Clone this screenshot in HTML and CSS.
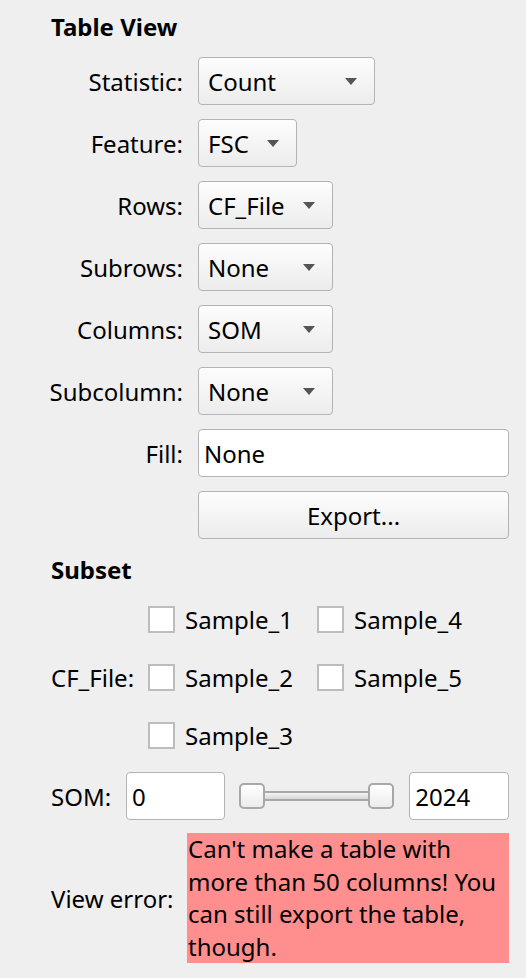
FILE: index.html
```html
<!DOCTYPE html>
<html>
<head>
<meta charset="utf-8">
<link rel="stylesheet" href="styles.css">
</head>
<body>
<div class="panel">
  <div class="heading">Table View</div>
  <div class="form">
    <div class="lbl">Statistic:</div>
    <div class="combo w-stat"><span>Count</span><i class="arrow"></i></div>
    <div class="lbl">Feature:</div>
    <div class="combo w-feat"><span>FSC</span><i class="arrow"></i></div>
    <div class="lbl">Rows:</div>
    <div class="combo w-mid"><span>CF_File</span><i class="arrow"></i></div>
    <div class="lbl">Subrows:</div>
    <div class="combo w-mid"><span>None</span><i class="arrow"></i></div>
    <div class="lbl">Columns:</div>
    <div class="combo w-mid"><span>SOM</span><i class="arrow"></i></div>
    <div class="lbl">Subcolumn:</div>
    <div class="combo w-mid"><span>None</span><i class="arrow"></i></div>
    <div class="lbl">Fill:</div>
    <div class="edit wide">None</div>
    <div></div>
    <div class="button wide">Export...</div>
  </div>
  <div class="heading subset">Subset</div>
  <div class="subset-row">
    <div class="lbl2">CF_File:</div>
    <div class="checks">
      <label class="check"><i class="box"></i>Sample_1</label>
      <label class="check"><i class="box"></i>Sample_4</label>
      <label class="check"><i class="box"></i>Sample_2</label>
      <label class="check"><i class="box"></i>Sample_5</label>
      <label class="check"><i class="box"></i>Sample_3</label>
    </div>
  </div>
  <div class="som-row">
    <div class="lbl2 som-lbl">SOM:</div>
    <div class="edit som-edit">0</div>
    <div class="slider">
      <i class="handle"></i>
      <i class="groove"></i>
      <i class="handle"></i>
    </div>
    <div class="edit som-edit2">2024</div>
  </div>
  <div class="err-row">
    <div class="lbl2 err-lbl">View error:</div>
    <div class="error">Can't make a table with more than 50 columns! You can still export the table, though.</div>
  </div>
</div>
</body>
</html>
```

FILE: styles.css
```css
html, body {
  margin: 0;
  padding: 0;
  background: #efefef;
}
body {
  font-family: "Noto Sans", "DejaVu Sans", sans-serif;
  font-size: 24px;
  color: #000;
  width: 526px;
  height: 978px;
  overflow: hidden;
}
.panel {
  padding: 10px 17px 0 51px;
}
.heading {
  font-weight: bold;
  line-height: 34px;
  height: 34px;
}
.form {
  margin-top: 13px;
  display: grid;
  grid-template-columns: 132px auto;
  column-gap: 15px;
  row-gap: 14px;
  align-items: center;
  justify-items: start;
}
.lbl {
  justify-self: end;
  white-space: nowrap;
}
.combo {
  box-sizing: border-box;
  height: 48px;
  border: 1px solid #b4b4b4;
  border-radius: 4px;
  background: linear-gradient(#fdfdfd, #ececec);
  display: flex;
  align-items: center;
  justify-content: space-between;
  padding: 0 17px 0 9px;
}
.arrow {
  width: 0;
  height: 0;
  border-left: 6px solid transparent;
  border-right: 6px solid transparent;
  border-top: 7px solid #555;
}
.w-stat { width: 177px; }
.w-feat { width: 99px; }
.w-mid { width: 135px; }
.edit {
  box-sizing: border-box;
  height: 48px;
  border: 1px solid #b4b4b4;
  border-radius: 4px;
  background: #fff;
  display: flex;
  align-items: center;
  padding: 0 5px;
}
.wide { width: 311px; }
.button {
  box-sizing: border-box;
  height: 48px;
  border: 1px solid #b4b4b4;
  border-radius: 4px;
  background: linear-gradient(#fdfdfd, #ececec);
  display: flex;
  align-items: center;
  justify-content: center;
}
.heading.subset {
  margin-top: 14px;
}
.subset-row {
  margin-top: 3px;
  display: flex;
  align-items: center;
}
.lbl2 {
  width: 97px;
  flex: none;
  white-space: nowrap;
}
.checks {
  display: grid;
  grid-template-columns: 169px auto;
  grid-auto-rows: 58px;
  align-items: center;
}
.check {
  display: flex;
  align-items: center;
  gap: 10px;
}
.box {
  box-sizing: border-box;
  width: 27px;
  height: 27px;
  border: 2px solid #bdbdbd;
  background: #fff;
}
.som-row {
  margin-top: 8px;
  display: flex;
  align-items: center;
}
.som-lbl {
  width: 75px;
}
.som-edit {
  width: 99px;
}
.som-edit2 {
  width: 100px;
}
.slider {
  margin: 0 15px 0 14px;
  width: 156px;
  display: flex;
  align-items: center;
}
.handle {
  box-sizing: border-box;
  width: 26px;
  height: 26px;
  border: 2px solid #a8a8a8;
  border-radius: 5px;
  background: linear-gradient(#ffffff, #ececec);
  flex: none;
}
.groove {
  flex: 1;
  height: 10px;
  box-sizing: border-box;
  border-top: 2px solid #a8a8a8;
  border-bottom: 2px solid #a8a8a8;
  background: linear-gradient(#f4f4f4, #d8d8d8);
}
.err-row {
  margin-top: 13px;
  display: flex;
  align-items: center;
}
.err-lbl {
  width: 136px;
}
.error {
  width: 322px;
  box-sizing: border-box;
  background: #ff8f8f;
  line-height: 32.5px;
  padding: 0 0 0 1px;
}
```
